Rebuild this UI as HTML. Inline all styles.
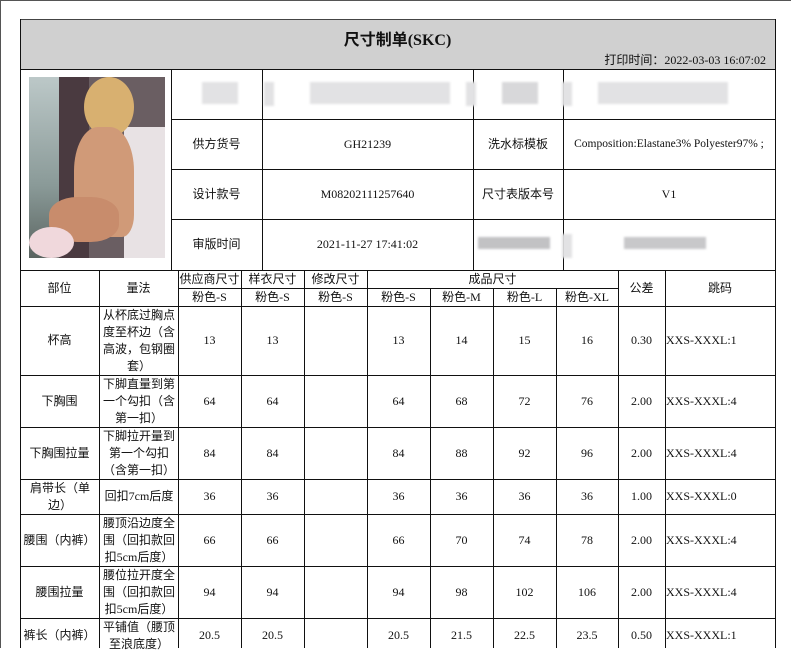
<!DOCTYPE html>
<html><head><meta charset="utf-8"><style>
body{margin:0;width:791px;height:648px;overflow:hidden;background:#fff;position:relative;font-family:"Liberation Serif","Noto Sans CJK SC",serif;font-size:12px;color:#111}
.v{position:absolute;width:1px;background:#111}
.h{position:absolute;height:1px;background:#111}
.t{position:absolute;display:flex;align-items:center;justify-content:center;text-align:center;line-height:17px}
.b{position:absolute;background:#e2e2e4;filter:blur(1px)}
</style></head><body>
<div style="position:absolute;left:0;top:0;width:791px;height:1px;background:#555"></div>
<div style="position:absolute;left:0;top:0;width:1px;height:648px;background:#555"></div>
<div style="position:absolute;left:20px;top:20px;width:755px;height:49px;background:#d0d0d0"></div>
<div class="h" style="left:20px;top:19px;width:756px;background:#444"></div>
<div class="v" style="left:20px;top:19px;height:629px"></div>
<div class="v" style="left:775px;top:19px;height:629px"></div>
<div class="t" style="left:20px;top:25px;width:755px;height:30px;font-size:16px;font-weight:bold">尺寸制单(SKC)</div>
<div class="t" style="left:560px;top:52px;width:206px;height:16px;justify-content:flex-end">打印时间：2022-03-03 16:07:02</div>
<div class="h" style="left:20px;top:69px;width:756px"></div>
<div style="position:absolute;left:29px;top:77px;width:136px;height:181px;overflow:hidden;background:#6a5e62">
 <div style="position:absolute;left:0;top:0;width:30px;height:181px;background:linear-gradient(#bcc8c8,#8a9a98 60%,#5a6460)"></div>
 <div style="position:absolute;left:30px;top:0;width:30px;height:181px;background:#4a3a40"></div>
 <div style="position:absolute;left:95px;top:50px;width:41px;height:131px;background:#e8e2e4"></div>
 <div style="position:absolute;left:55px;top:0;width:50px;height:60px;border-radius:50%;background:#d8b070"></div>
 <div style="position:absolute;left:45px;top:50px;width:60px;height:110px;border-radius:40% 40% 20% 20%;background:#d09a78"></div>
 <div style="position:absolute;left:20px;top:120px;width:70px;height:45px;border-radius:40%;background:#c88c6c"></div>
 <div style="position:absolute;left:0;top:150px;width:45px;height:31px;border-radius:50%;background:#f0d8dc"></div>
</div>
<div class="v" style="left:171px;top:69px;height:201px"></div>
<div class="v" style="left:262px;top:69px;height:201px"></div>
<div class="v" style="left:473px;top:69px;height:201px"></div>
<div class="v" style="left:563px;top:69px;height:201px"></div>
<div class="h" style="left:171px;top:119px;width:604px"></div>
<div class="h" style="left:171px;top:169px;width:604px"></div>
<div class="h" style="left:171px;top:219px;width:604px"></div>
<div class="h" style="left:20px;top:270px;width:756px"></div>
<div class="b" style="left:202px;top:82px;width:36px;height:22px"></div>
<div class="b" style="left:264px;top:82px;width:10px;height:24px"></div>
<div class="b" style="left:310px;top:82px;width:140px;height:22px"></div>
<div class="b" style="left:466px;top:82px;width:10px;height:24px"></div>
<div class="b" style="left:502px;top:82px;width:36px;height:22px;background:#d8d8da"></div>
<div class="b" style="left:562px;top:82px;width:10px;height:24px"></div>
<div class="b" style="left:598px;top:82px;width:130px;height:22px"></div>
<div class="b" style="left:478px;top:237px;width:72px;height:12px;background:#c2c2c4"></div>
<div class="b" style="left:562px;top:234px;width:10px;height:24px"></div>
<div class="b" style="left:624px;top:237px;width:82px;height:12px;background:#c8c8ca"></div>
<div class="t" style="left:171px;top:119px;width:91px;height:50px">供方货号</div>
<div class="t" style="left:262px;top:119px;width:211px;height:50px">GH21239</div>
<div class="t" style="left:473px;top:119px;width:90px;height:50px">洗水标模板</div>
<div class="t" style="left:563px;top:119px;width:212px;height:50px;font-size:11.5px">Composition:Elastane3% Polyester97% ;</div>
<div class="t" style="left:171px;top:169px;width:91px;height:50px">设计款号</div>
<div class="t" style="left:262px;top:169px;width:211px;height:50px">M08202111257640</div>
<div class="t" style="left:473px;top:169px;width:90px;height:50px">尺寸表版本号</div>
<div class="t" style="left:563px;top:169px;width:212px;height:50px">V1</div>
<div class="t" style="left:171px;top:219px;width:91px;height:51px">审版时间</div>
<div class="t" style="left:262px;top:219px;width:211px;height:51px">2021-11-27 17:41:02</div>
<div class="v" style="left:99px;top:270px;height:378px"></div>
<div class="v" style="left:178px;top:270px;height:378px"></div>
<div class="v" style="left:241px;top:270px;height:378px"></div>
<div class="v" style="left:304px;top:270px;height:378px"></div>
<div class="v" style="left:367px;top:270px;height:378px"></div>
<div class="v" style="left:430px;top:288px;height:360px"></div>
<div class="v" style="left:493px;top:288px;height:360px"></div>
<div class="v" style="left:556px;top:288px;height:360px"></div>
<div class="v" style="left:618px;top:270px;height:378px"></div>
<div class="v" style="left:665px;top:270px;height:378px"></div>
<div class="h" style="left:178px;top:288px;width:440px"></div>
<div class="h" style="left:20px;top:306px;width:756px"></div>
<div class="h" style="left:20px;top:375px;width:756px"></div>
<div class="h" style="left:20px;top:427px;width:756px"></div>
<div class="h" style="left:20px;top:479px;width:756px"></div>
<div class="h" style="left:20px;top:514px;width:756px"></div>
<div class="h" style="left:20px;top:566px;width:756px"></div>
<div class="h" style="left:20px;top:618px;width:756px"></div>
<div class="t" style="left:20px;top:270px;width:79px;height:36px">部位</div>
<div class="t" style="left:99px;top:270px;width:79px;height:36px">量法</div>
<div class="t" style="left:178px;top:270px;width:63px;height:18px">供应商尺寸</div>
<div class="t" style="left:241px;top:270px;width:63px;height:18px">样衣尺寸</div>
<div class="t" style="left:304px;top:270px;width:63px;height:18px">修改尺寸</div>
<div class="t" style="left:367px;top:270px;width:251px;height:18px">成品尺寸</div>
<div class="t" style="left:618px;top:270px;width:47px;height:36px">公差</div>
<div class="t" style="left:665px;top:270px;width:110px;height:36px">跳码</div>
<div class="t" style="left:178px;top:288px;width:63px;height:18px">粉色-S</div>
<div class="t" style="left:241px;top:288px;width:63px;height:18px">粉色-S</div>
<div class="t" style="left:304px;top:288px;width:63px;height:18px">粉色-S</div>
<div class="t" style="left:367px;top:288px;width:63px;height:18px">粉色-S</div>
<div class="t" style="left:430px;top:288px;width:63px;height:18px">粉色-M</div>
<div class="t" style="left:493px;top:288px;width:63px;height:18px">粉色-L</div>
<div class="t" style="left:556px;top:288px;width:62px;height:18px">粉色-XL</div>

<div class="t" style="left:20px;top:306px;width:79px;height:69px">杯高</div>
<div class="t" style="left:101px;top:306px;width:76px;height:69px">从杯底过胸点度至杯边（含高波，包钢圈套）</div>
<div class="t" style="left:178px;top:306px;width:63px;height:69px">13</div><div class="t" style="left:241px;top:306px;width:63px;height:69px">13</div><div class="t" style="left:367px;top:306px;width:63px;height:69px">13</div><div class="t" style="left:430px;top:306px;width:63px;height:69px">14</div><div class="t" style="left:493px;top:306px;width:63px;height:69px">15</div><div class="t" style="left:556px;top:306px;width:62px;height:69px">16</div><div class="t" style="left:618px;top:306px;width:47px;height:69px">0.30</div><div class="t" style="left:666px;top:306px;width:109px;height:69px;justify-content:flex-start">XXS-XXXL:1</div>

<div class="t" style="left:20px;top:375px;width:79px;height:52px">下胸围</div>
<div class="t" style="left:101px;top:375px;width:76px;height:52px">下脚直量到第一个勾扣（含第一扣）</div>
<div class="t" style="left:178px;top:375px;width:63px;height:52px">64</div><div class="t" style="left:241px;top:375px;width:63px;height:52px">64</div><div class="t" style="left:367px;top:375px;width:63px;height:52px">64</div><div class="t" style="left:430px;top:375px;width:63px;height:52px">68</div><div class="t" style="left:493px;top:375px;width:63px;height:52px">72</div><div class="t" style="left:556px;top:375px;width:62px;height:52px">76</div><div class="t" style="left:618px;top:375px;width:47px;height:52px">2.00</div><div class="t" style="left:666px;top:375px;width:109px;height:52px;justify-content:flex-start">XXS-XXXL:4</div>

<div class="t" style="left:20px;top:427px;width:79px;height:52px">下胸围拉量</div>
<div class="t" style="left:101px;top:427px;width:76px;height:52px">下脚拉开量到第一个勾扣（含第一扣）</div>
<div class="t" style="left:178px;top:427px;width:63px;height:52px">84</div><div class="t" style="left:241px;top:427px;width:63px;height:52px">84</div><div class="t" style="left:367px;top:427px;width:63px;height:52px">84</div><div class="t" style="left:430px;top:427px;width:63px;height:52px">88</div><div class="t" style="left:493px;top:427px;width:63px;height:52px">92</div><div class="t" style="left:556px;top:427px;width:62px;height:52px">96</div><div class="t" style="left:618px;top:427px;width:47px;height:52px">2.00</div><div class="t" style="left:666px;top:427px;width:109px;height:52px;justify-content:flex-start">XXS-XXXL:4</div>

<div class="t" style="left:24px;top:479px;width:72px;height:35px">肩带长（单边）</div>
<div class="t" style="left:101px;top:479px;width:76px;height:35px">回扣7cm后度</div>
<div class="t" style="left:178px;top:479px;width:63px;height:35px">36</div><div class="t" style="left:241px;top:479px;width:63px;height:35px">36</div><div class="t" style="left:367px;top:479px;width:63px;height:35px">36</div><div class="t" style="left:430px;top:479px;width:63px;height:35px">36</div><div class="t" style="left:493px;top:479px;width:63px;height:35px">36</div><div class="t" style="left:556px;top:479px;width:62px;height:35px">36</div><div class="t" style="left:618px;top:479px;width:47px;height:35px">1.00</div><div class="t" style="left:666px;top:479px;width:109px;height:35px;justify-content:flex-start">XXS-XXXL:0</div>

<div class="t" style="left:20px;top:514px;width:79px;height:52px">腰围（内裤）</div>
<div class="t" style="left:101px;top:514px;width:76px;height:52px">腰顶沿边度全围（回扣款回扣5cm后度）</div>
<div class="t" style="left:178px;top:514px;width:63px;height:52px">66</div><div class="t" style="left:241px;top:514px;width:63px;height:52px">66</div><div class="t" style="left:367px;top:514px;width:63px;height:52px">66</div><div class="t" style="left:430px;top:514px;width:63px;height:52px">70</div><div class="t" style="left:493px;top:514px;width:63px;height:52px">74</div><div class="t" style="left:556px;top:514px;width:62px;height:52px">78</div><div class="t" style="left:618px;top:514px;width:47px;height:52px">2.00</div><div class="t" style="left:666px;top:514px;width:109px;height:52px;justify-content:flex-start">XXS-XXXL:4</div>

<div class="t" style="left:20px;top:566px;width:79px;height:52px">腰围拉量</div>
<div class="t" style="left:101px;top:566px;width:76px;height:52px">腰位拉开度全围（回扣款回扣5cm后度）</div>
<div class="t" style="left:178px;top:566px;width:63px;height:52px">94</div><div class="t" style="left:241px;top:566px;width:63px;height:52px">94</div><div class="t" style="left:367px;top:566px;width:63px;height:52px">94</div><div class="t" style="left:430px;top:566px;width:63px;height:52px">98</div><div class="t" style="left:493px;top:566px;width:63px;height:52px">102</div><div class="t" style="left:556px;top:566px;width:62px;height:52px">106</div><div class="t" style="left:618px;top:566px;width:47px;height:52px">2.00</div><div class="t" style="left:666px;top:566px;width:109px;height:52px;justify-content:flex-start">XXS-XXXL:4</div>

<div class="t" style="left:20px;top:618px;width:79px;height:35px">裤长（内裤）</div>
<div class="t" style="left:101px;top:619px;width:76px;height:34px;align-items:flex-start">平铺值（腰顶至浪底度）</div>
<div class="t" style="left:178px;top:618px;width:63px;height:35px">20.5</div><div class="t" style="left:241px;top:618px;width:63px;height:35px">20.5</div><div class="t" style="left:367px;top:618px;width:63px;height:35px">20.5</div><div class="t" style="left:430px;top:618px;width:63px;height:35px">21.5</div><div class="t" style="left:493px;top:618px;width:63px;height:35px">22.5</div><div class="t" style="left:556px;top:618px;width:62px;height:35px">23.5</div><div class="t" style="left:618px;top:618px;width:47px;height:35px">0.50</div><div class="t" style="left:666px;top:618px;width:109px;height:35px;justify-content:flex-start">XXS-XXXL:1</div>
</body></html>
